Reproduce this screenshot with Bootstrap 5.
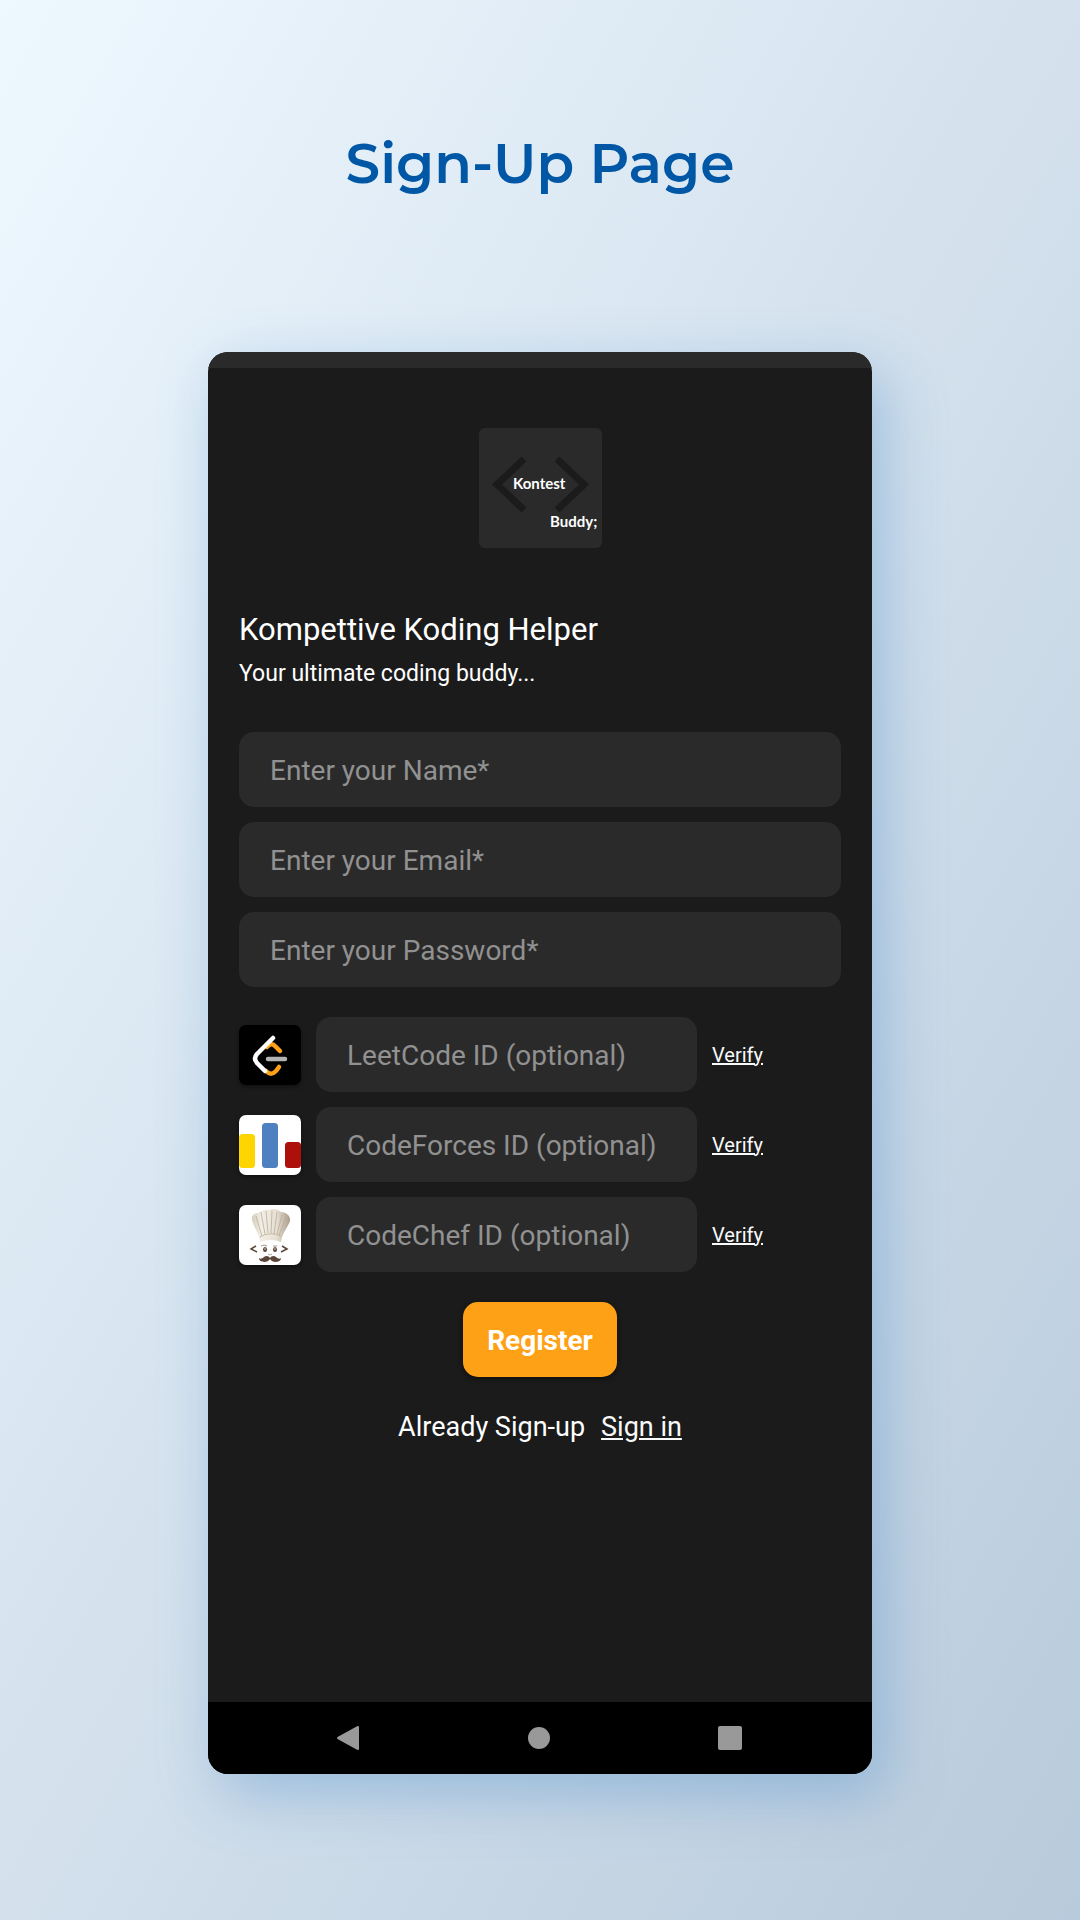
<!DOCTYPE html>
<html lang="en">
<head>
<meta charset="utf-8">
<meta name="viewport" content="width=device-width, initial-scale=1">
<title>Sign-Up Page</title>
<link href="https://cdn.jsdelivr.net/npm/bootstrap@5.3.0/dist/css/bootstrap.min.css" rel="stylesheet">
<style>
body{font-family:Roboto,"Liberation Sans",sans-serif;min-height:100vh;background:linear-gradient(120deg,#eef8ff 0%,#d4e1ed 50%,#b8cadb 100%);padding:128px 24px 145px}
.page-title{font-family:Montserrat,Inter,sans-serif;font-weight:600;font-size:55px;line-height:72px;color:#0057a5;margin-bottom:152px}
.phone{width:100%;max-width:664px;border-radius:20px;background:#1b1b1b;color:#fff;box-shadow:12px 20px 60px 0 rgba(75,140,200,.4)}
.status-strip{height:16px;background:#2a2a2a}
.screen{padding:60px 31px 256px}
.brand-logo{width:123px;height:120px;border-radius:6px}
.app-name{font-size:31px;line-height:38px;font-weight:400;margin:63px 0 0}
.tagline{font-size:23px;line-height:30px;margin:10px 0 43px}
.field,.field:focus{height:75px;border:0;border-radius:15px;background:#2a2a2a;color:#fff;font-size:28px;line-height:36px;padding:2px 31px 0}
.field::placeholder{color:#919191;opacity:1}
.stack{gap:15px}
.id-list{margin-top:30px}
.id-field{flex:0 1 381px;min-width:0}
.site-icon{flex:none;width:62px;height:60px;border-radius:7px;box-shadow:0 2px 4px rgba(0,0,0,.4)}
.verify{font-size:20px;line-height:24px}
.register,.register:hover{width:154px;height:75px;border:0;border-radius:15px;background:#ffa116;color:#fff;font-size:28px;font-weight:700;margin:30px 0 31px;padding:3px 0 0;box-shadow:0 2px 5px rgba(0,0,0,.5)}
.signin-line{font-size:27px;line-height:38px;gap:16px}
.nav-keys{height:72px;background:#000;padding:0 130px 0 128px}
.nav-key{border:0;background:none;padding:0;display:flex}
.logo-word{font:700 15px Lato,sans-serif;fill:#fff}
</style>
<script src="https://cdn.jsdelivr.net/npm/bootstrap@5.3.0/dist/js/bootstrap.bundle.min.js"></script>
</head>
<body class="d-flex flex-column align-items-center">
<h1 class="page-title text-center">Sign-Up Page</h1>
<main class="phone overflow-hidden">
  <div class="status-strip"></div>
  <div class="screen">
    <svg class="brand-logo d-block mx-auto" viewBox="0 0 123 120" role="img" aria-label="Kontest Buddy">
      <rect width="123" height="120" fill="#2a2a2a"/>
      <path d="M45 31L18 56.500L45 82M78 31L105 56.500L78 82" fill="none" stroke="#1b1b1b" stroke-width="7"/>
      <text class="logo-word" x="34" y="61">Kontest</text>
      <text class="logo-word" x="71" y="99">Buddy;</text>
    </svg>
    <h2 class="app-name">Kompettive Koding Helper</h2>
    <p class="tagline">Your ultimate coding buddy...</p>
    <form>
      <div class="stack d-flex flex-column">
        <input class="form-control field" type="text" aria-label="Name" placeholder="Enter your Name*">
        <input class="form-control field" type="email" aria-label="Email" placeholder="Enter your Email*">
        <input class="form-control field" type="password" aria-label="Password" placeholder="Enter your Password*">
      </div>
      <div class="id-list stack d-flex flex-column">
        <div class="stack d-flex align-items-center">
          <svg class="site-icon" viewBox="0 0 62 60" aria-hidden="true">
            <rect width="62" height="60"/>
            <g fill="none" stroke-linecap="round" stroke-linejoin="round" stroke-width="4.500">
              <path d="M28 22C31 18 34 19 36 21L41 26M27 46C31 50 34 49 37 46L40 42" stroke="#ffa116"/>
              <path d="M29 34H46" stroke="#b3b3b3"/>
              <path d="M34 13L18 29Q14 33.500 18 38L26 46" stroke="#fff"/>
            </g>
          </svg>
          <input class="form-control field id-field" type="text" aria-label="LeetCode ID" placeholder="LeetCode ID (optional)">
          <a class="verify link-light" href="#">Verify</a>
        </div>
        <div class="stack d-flex align-items-center">
          <svg class="site-icon" viewBox="0 0 62 60" aria-hidden="true">
            <rect width="62" height="60" fill="#fff"/>
            <rect x="0" y="19" width="16" height="34" rx="3.500" fill="#ffd500"/>
            <rect x="23" y="8" width="16" height="45" rx="3.500" fill="#4f81c1"/>
            <rect x="46" y="27" width="16" height="26" rx="3.500" fill="#ad0f0b"/>
          </svg>
          <input class="form-control field id-field" type="text" aria-label="CodeForces ID" placeholder="CodeForces ID (optional)">
          <a class="verify link-light" href="#">Verify</a>
        </div>
        <div class="stack d-flex align-items-center">
          <svg class="site-icon" viewBox="0 0 62 60" aria-hidden="true">
            <defs><linearGradient id="hat"><stop offset="0" stop-color="#d5cdbc"/><stop offset=".25" stop-color="#f3efe6"/><stop offset=".65" stop-color="#e6dfd2"/><stop offset="1" stop-color="#a99c8a"/></linearGradient></defs>
            <rect width="62" height="60" fill="#fff"/>
            <path d="M13 15C12 10 16 8 19 8C22 5 26 4 30 5C34 3 39 4 42 7C47 7 52 11 51 16C49 22 43 28 42 37Q32 33 21 37C21 30 15 23 13 15Z" fill="url(#hat)"/>
            <path d="M17 11Q20 22 23 31M22 7Q24 19 26 29M27 6L29 28M33 6L32 28M38 7L35 29M43 10L38 29M47 12L40 30M21 32Q31 26 42 31" fill="none" stroke="#b9ad99" stroke-width=".8"/>
            <path d="M17 41L12 44L18 47M43 41L48 44L42 47" fill="none" stroke="#5b4438" stroke-width="1.500"/>
            <path d="M22 41Q25 39 28 41M34 41L38 41" fill="none" stroke="#8b7b70" stroke-width=".8"/>
            <ellipse cx="26" cy="44.500" rx="2" ry="2.500" fill="#5b4438"/><ellipse cx="36" cy="44.500" rx="2" ry="2.500" fill="#5b4438"/>
            <circle cx="26" cy="44" r=".7" fill="#fff"/><circle cx="36" cy="44" r=".7" fill="#fff"/>
            <path d="M29 49Q31 51 33 49" fill="none" stroke="#a58f80" stroke-width=".8"/>
            <path d="M31 53C30 51 27 50 25 52C23 54 21 54 20 53C20 58 29 58 31 54C33 58 42 58 42 53C41 54 39 54 37 52C35 50 32 51 31 53Z" fill="#5b4438"/>
          </svg>
          <input class="form-control field id-field" type="text" aria-label="CodeChef ID" placeholder="CodeChef ID (optional)">
          <a class="verify link-light" href="#">Verify</a>
        </div>
      </div>
      <button class="btn register d-block mx-auto" type="submit">Register</button>
    </form>
    <div class="signin-line d-flex justify-content-center"><span>Already Sign-up</span><a class="link-light" href="#">Sign in</a></div>
  </div>
  <div class="nav-keys d-flex justify-content-between align-items-center">
    <button class="nav-key" type="button" aria-label="Back"><svg width="24" height="26" viewBox="0 0 24 26"><path d="M22 2V24L2 13Z" fill="#999" stroke="#999" stroke-width="2" stroke-linejoin="round"/></svg></button>
    <button class="nav-key" type="button" aria-label="Home"><svg width="22" height="22" viewBox="0 0 22 22"><circle cx="11" cy="11" r="11" fill="#999"/></svg></button>
    <button class="nav-key" type="button" aria-label="Recent apps"><svg width="24" height="24" viewBox="0 0 24 24"><rect width="24" height="24" rx="2" fill="#999"/></svg></button>
  </div>
</main>
</body>
</html>
